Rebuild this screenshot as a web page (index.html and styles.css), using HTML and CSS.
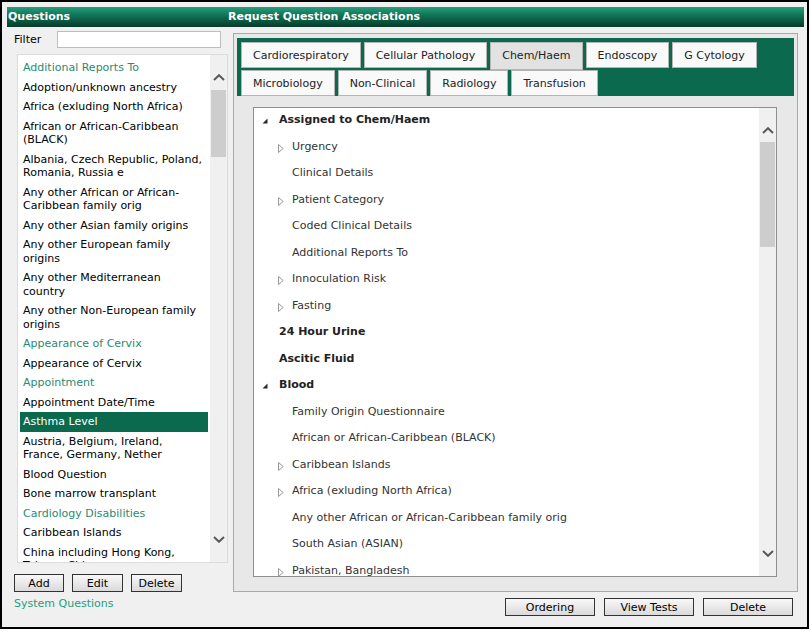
FILE: index.html
```html
<!DOCTYPE html>
<html lang="en">
<head>
    <meta charset="utf-8">
    <title>Request Question Associations</title>
    <link rel="stylesheet" href="styles.css">
</head>
<body>
    <div class="frame">
        <div class="titles">
            <div class="title">Questions</div>
            <div class="title right">Request Question Associations</div>
        </div>

        <div class="cols">
            <!-- question list -->
            <div class="left">
                <div class="filter">
                    <label>Filter</label>
                    <input type="text">
                </div>

                <div class="listbox">
                    <ul class="items">
                        <li class="grp">Additional Reports To</li>
                        <li>Adoption/unknown ancestry</li>
                        <li>Africa (exluding North Africa)</li>
                        <li>African or African-Caribbean (BLACK)</li>
                        <li>Albania, Czech Republic, Poland, Romania, Russia e</li>
                        <li>Any other African or African-Caribbean family orig</li>
                        <li>Any other Asian family origins</li>
                        <li>Any other European family origins</li>
                        <li>Any other Mediterranean country</li>
                        <li>Any other Non-European family origins</li>
                        <li class="grp">Appearance of Cervix</li>
                        <li>Appearance of Cervix</li>
                        <li class="grp">Appointment</li>
                        <li>Appointment Date/Time</li>
                        <li class="sel">Asthma Level</li>
                        <li>Austria, Belgium, Ireland, France, Germany, Nether</li>
                        <li>Blood Question</li>
                        <li>Bone marrow transplant</li>
                        <li class="grp">Cardiology Disabilities</li>
                        <li>Caribbean Islands</li>
                        <li>China including Hong Kong, Taiwan, China</li>
                    </ul>
                    <div class="scroll">
                        <svg width="12" height="7" viewBox="0 0 12 7"><polyline points="1,6 6,1.2 11,6" fill="none" stroke="#5a5a5a" stroke-width="2"/></svg>
                        <div class="thumb"></div>
                        <div class="fill"></div>
                        <svg width="12" height="7" viewBox="0 0 12 7"><polyline points="1,1 6,5.8 11,1" fill="none" stroke="#5a5a5a" stroke-width="2"/></svg>
                    </div>
                </div>

                <div class="btns">
                    <button>Add</button>
                    <button class="wide">Edit</button>
                    <button class="wide">Delete</button>
                </div>
                <a class="syslink">System Questions</a>
            </div>

            <!-- associations -->
            <div class="right">
                <div class="panel">
                    <div class="tabs">
                        <div class="tab">Cardiorespiratory</div>
                        <div class="tab">Cellular Pathology</div>
                        <div class="tab on">Chem/Haem</div>
                        <div class="tab">Endoscopy</div>
                        <div class="tab">G Cytology</div>
                        <div class="tab">Microbiology</div>
                        <div class="tab">Non-Clinical</div>
                        <div class="tab">Radiology</div>
                        <div class="tab">Transfusion</div>
                    </div>

                    <div class="tree">
                        <ul class="nodes">
                            <li class="n0"><span class="tg"><svg width="6" height="6"><polygon points="5.5,0.5 5.5,5.5 0.5,5.5" fill="#2a2a2a"/></svg></span>Assigned to Chem/Haem</li>
                            <li class="n1"><span class="tg"><svg width="6" height="9"><polygon points="0.5,0.5 5.2,4.5 0.5,8.5" fill="#fafafa" stroke="#9a9a9a"/></svg></span>Urgency</li>
                            <li class="n1"><span class="tg"></span>Clinical Details</li>
                            <li class="n1"><span class="tg"><svg width="6" height="9"><polygon points="0.5,0.5 5.2,4.5 0.5,8.5" fill="#fafafa" stroke="#9a9a9a"/></svg></span>Patient Category</li>
                            <li class="n1"><span class="tg"></span>Coded Clinical Details</li>
                            <li class="n1"><span class="tg"></span>Additional Reports To</li>
                            <li class="n1"><span class="tg"><svg width="6" height="9"><polygon points="0.5,0.5 5.2,4.5 0.5,8.5" fill="#fafafa" stroke="#9a9a9a"/></svg></span>Innoculation Risk</li>
                            <li class="n1"><span class="tg"><svg width="6" height="9"><polygon points="0.5,0.5 5.2,4.5 0.5,8.5" fill="#fafafa" stroke="#9a9a9a"/></svg></span>Fasting</li>
                            <li class="n0"><span class="tg"></span>24 Hour Urine</li>
                            <li class="n0"><span class="tg"></span>Ascitic Fluid</li>
                            <li class="n0"><span class="tg"><svg width="6" height="6"><polygon points="5.5,0.5 5.5,5.5 0.5,5.5" fill="#2a2a2a"/></svg></span>Blood</li>
                            <li class="n1"><span class="tg"></span>Family Origin Questionnaire</li>
                            <li class="n1"><span class="tg"></span>African or African-Caribbean (BLACK)</li>
                            <li class="n1"><span class="tg"><svg width="6" height="9"><polygon points="0.5,0.5 5.2,4.5 0.5,8.5" fill="#fafafa" stroke="#9a9a9a"/></svg></span>Caribbean Islands</li>
                            <li class="n1"><span class="tg"><svg width="6" height="9"><polygon points="0.5,0.5 5.2,4.5 0.5,8.5" fill="#fafafa" stroke="#9a9a9a"/></svg></span>Africa (exluding North Africa)</li>
                            <li class="n1"><span class="tg"></span>Any other African or African-Caribbean family orig</li>
                            <li class="n1"><span class="tg"></span>South Asian (ASIAN)</li>
                            <li class="n1"><span class="tg"><svg width="6" height="9"><polygon points="0.5,0.5 5.2,4.5 0.5,8.5" fill="#fafafa" stroke="#9a9a9a"/></svg></span>Pakistan, Bangladesh</li>
                        </ul>
                        <div class="scroll tall">
                            <svg width="12" height="7" viewBox="0 0 12 7"><polyline points="1,6 6,1.2 11,6" fill="none" stroke="#5a5a5a" stroke-width="2"/></svg>
                            <div class="thumb"></div>
                            <div class="fill"></div>
                            <svg width="12" height="7" viewBox="0 0 12 7"><polyline points="1,1 6,5.8 11,1" fill="none" stroke="#5a5a5a" stroke-width="2"/></svg>
                        </div>
                    </div>
                </div>

                <div class="actions">
                    <button>Ordering</button>
                    <button>View Tests</button>
                    <button>Delete</button>
                </div>
            </div>
        </div>
    </div>
</body>
</html>
```

FILE: styles.css
```css
        body {
            margin: 0;
            background: #fff;
            font-family: "DejaVu Sans", Verdana, sans-serif;
            font-size: 11px;
            color: #000;
        }

        .frame {
            box-sizing: border-box;
            width: 809px;
            height: 629px;
            border: 2px solid #000;
            background: #f0f0f0;
            padding: 5px 3px 0 5px;
        }

        /* green title bars */
        .titles {
            display: grid;
            grid-template-columns: 218px 1fr;
            height: 20px;
            background: linear-gradient(#27a07d 0%, #13795b 35%, #0b5841 70%, #073a2a 100%);
        }

        .title {
            line-height: 20px;
            padding-left: 1px;
            color: #fff;
            font-weight: bold;
        }

        .title.right {
            padding-left: 3px;
        }

        .cols {
            display: grid;
            grid-template-columns: 226px 1fr;
        }

        /* left column */
        .filter {
            display: flex;
            align-items: center;
            height: 17px;
            margin-top: 4px;
            padding-left: 7px;
        }

        .filter label {
            width: 43px;
        }

        .filter input {
            box-sizing: border-box;
            width: 164px;
            height: 17px;
            padding: 0;
            border: 1px solid #bdbdbd;
            background: #fff;
        }

        .listbox {
            display: flex;
            box-sizing: border-box;
            width: 211px;
            height: 509px;
            margin: 6px 0 0 10px;
            border: 1px solid #dcdcdc;
            background: #fff;
            overflow: hidden;
        }

        .items {
            flex: 1;
            margin: 0;
            padding: 3px 2px 0;
            list-style: none;
        }

        .items li {
            padding: 3px 2px 3px 3px;
            line-height: 13.5px;
        }

        .items .grp {
            color: #2a8a72;
        }

        .items .sel {
            background: #0b6a4e;
            color: #fff;
        }

        .scroll {
            flex: none;
            display: flex;
            flex-direction: column;
            align-items: center;
            box-sizing: border-box;
            width: 17px;
            padding: 19px 0;
            background: #f0f0f0;
        }

        .scroll svg {
            display: block;
        }

        .scroll .thumb {
            width: 15px;
            height: 67px;
            margin-top: 9px;
            background: #cdcdcd;
        }

        .scroll.tall .thumb {
            height: 105px;
            margin-top: 8px;
        }

        .scroll .fill {
            flex: 1;
        }

        button {
            box-sizing: border-box;
            height: 18px;
            padding: 0;
            border: 1px solid #333;
            background: linear-gradient(#f8f8f8, #dadada);
            font: inherit;
            color: #000;
        }

        .btns {
            display: flex;
            gap: 8px;
            margin: 11px 0 0 7px;
        }

        .btns button {
            width: 50px;
        }

        .btns button.wide {
            width: 51px;
        }

        .syslink {
            display: block;
            margin: 5px 0 0 7px;
            line-height: 13px;
            color: #1f9e7d;
        }

        /* right column */
        .panel {
            box-sizing: border-box;
            height: 559px;
            margin: 6px 6px 0 0;
            padding: 4px 3px 0;
            border: 1px solid #a9a9a9;
            background: #e8e8e8;
        }

        .tabs {
            display: flex;
            flex-wrap: wrap;
            gap: 2px 3px;
            padding: 4px 0 0 4px;
            background: #0b6a4e;
        }

        .tab {
            box-sizing: border-box;
            height: 26px;
            padding: 1px 11px 0;
            border: 1px solid #b4b4b4;
            background: #f9f9f9;
            line-height: 23px;
            color: #222;
        }

        .tab.on {
            height: 28px;
            margin-bottom: -2px;
            background: #e2e2e2;
        }

        .tree {
            display: flex;
            box-sizing: border-box;
            height: 470px;
            margin: 11px 17px 0 16px;
            border: 1px solid #8f8f8f;
            background: #fff;
            overflow: hidden;
        }

        .nodes {
            flex: 1;
            margin: 0;
            padding: 0;
            list-style: none;
        }

        .nodes li {
            display: flex;
            flex: none;
            box-sizing: border-box;
            height: 26.5px;
            padding-top: 5px;
            line-height: 14px;
            color: #333;
            white-space: nowrap;
        }

        .nodes .n0 {
            padding-left: 8px;
            font-weight: bold;
            color: #222;
        }

        .nodes .n1 {
            padding-left: 24px;
        }

        .tg {
            flex: none;
        }

        .tg svg {
            display: block;
        }

        .n0 .tg {
            width: 17px;
        }

        .n0 .tg svg {
            margin-top: 5px;
        }

        .n1 .tg {
            width: 14px;
        }

        .n1 .tg svg {
            margin-top: 4px;
        }

        .actions {
            display: flex;
            justify-content: flex-end;
            gap: 9px;
            margin: 6px 11px 0 0;
        }

        .actions button {
            width: 90px;
        }
```
